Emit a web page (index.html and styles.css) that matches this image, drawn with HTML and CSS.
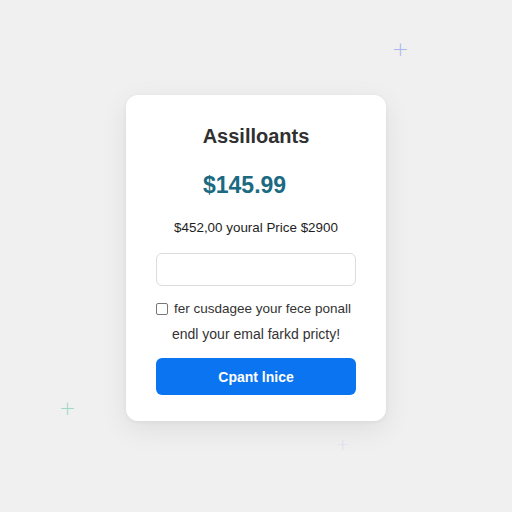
FILE: index.html
```html
<!DOCTYPE html>
<html>
<head>
<meta charset="utf-8">
<link rel="stylesheet" href="styles.css">
</head>
<body>
<div class="stage">
  <span class="spark spark-blue">+</span>
  <span class="spark spark-green">+</span>
  <span class="spark spark-faint">+</span>
  <div class="card">
    <h1 class="title">Assilloants</h1>
    <div class="price">$145.99</div>
    <p class="sub">$452,00 youral Price $2900</p>
    <input class="field" type="text">
    <label class="check"><span class="box"></span><span class="check-text">fer cusdagee your fece ponall</span></label>
    <p class="note">endl your emal farkd pricty!</p>
    <button class="btn">Cpant lnice</button>
  </div>
</div>
</body>
</html>
```
FILE: styles.css
```css
html, body { margin: 0; padding: 0; }
body {
  width: 512px; height: 512px;
  background: #f0f0f0;
  font-family: "Liberation Sans", Arial, sans-serif;
  overflow: hidden;
}
.stage {
  position: relative;
  width: 512px; height: 512px;
  display: flex;
  justify-content: center;
  padding-top: 95px;
  box-sizing: border-box;
}
.spark {
  position: absolute;
  font-family: "DejaVu Sans", sans-serif;
  font-size: 20px;
  line-height: 20px;
  font-weight: 300;
}
.spark-blue { left: 392px; top: 39px; color: #aab4f2; }
.spark-green { left: 59px; top: 398px; color: #9fd9c4; }
.spark-faint { left: 336px; top: 435px; color: #dcdcf2; font-size: 16px; }
.card {
  width: 260px; height: 326px;
  box-sizing: border-box;
  background: #fff;
  border-radius: 12px;
  box-shadow: 0 8px 28px rgba(0,0,0,0.08), 0 1px 4px rgba(0,0,0,0.05);
  padding: 29px 30px 0;
  display: flex;
  flex-direction: column;
}
.title {
  margin: 0;
  text-align: center;
  font-size: 20px;
  font-weight: 700;
  color: #303030;
  line-height: 24px;
}
.price {
  margin-top: 24px;
  padding-left: 47px;
  font-size: 23px;
  font-weight: 700;
  color: #1b6a82;
  line-height: 27px;
}
.sub {
  margin: 21px 0 0;
  text-align: center;
  font-size: 13.4px;
  color: #1e1e1e;
  line-height: 16px;
  white-space: nowrap;
}
.field {
  margin-top: 17px;
  height: 33px;
  box-sizing: border-box;
  border: 1px solid #dcdcdc;
  border-radius: 6px;
  background: #fff;
  width: 200px;
}
.check {
  margin-top: 15px;
  display: flex;
  align-items: center;
  gap: 6px;
  font-size: 13.5px;
  color: #333;
  line-height: 16px;
  white-space: nowrap;
}
.box {
  width: 10px; height: 10px;
  border: 1px solid #777;
  border-radius: 2px;
  flex: none;
}
.note {
  margin: 9px 0 0;
  text-align: center;
  font-size: 14px;
  color: #333;
  line-height: 16px;
  white-space: nowrap;
}
.btn {
  margin-top: 16px;
  height: 37px;
  border: none;
  border-radius: 6px;
  background: #0b74f1;
  color: #fff;
  font-family: "Liberation Sans", Arial, sans-serif;
  font-size: 14px;
  font-weight: 700;
}
```
